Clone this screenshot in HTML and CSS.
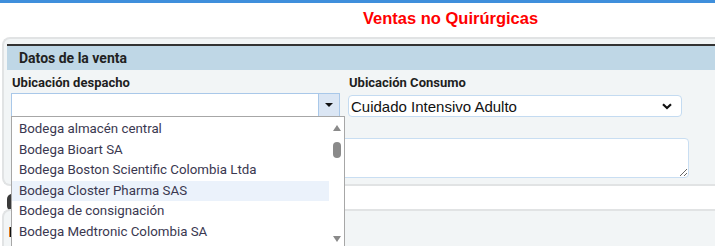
FILE: index.html
```html
<!DOCTYPE html>
<html>
<head>
  <title>Ventas no Quirúrgicas</title>
  <link rel="stylesheet" href="styles.css">
</head>
<body>
  <div class="topbar"></div>
  <h1 class="title">Ventas no Quirúrgicas</h1>

  <div class="panel">
    <div class="panel-header">Datos de la venta</div>
    <div class="fields">
      <div class="field field-left">
        <div class="label">Ubicación despacho</div>
        <div class="combo">
          <div class="combo-input"></div>
          <div class="combo-button"><span class="caret"></span></div>
        </div>
        <div class="dropdown">
          <div class="options">
            <div class="option">Bodega almacén central</div>
            <div class="option">Bodega Bioart SA</div>
            <div class="option">Bodega Boston Scientific Colombia Ltda</div>
            <div class="option hover">Bodega Closter Pharma SAS</div>
            <div class="option">Bodega de consignación</div>
            <div class="option">Bodega Medtronic Colombia SA</div>
          </div>
          <div class="scrollbar">
            <span class="scroll-up"></span>
            <span class="thumb"></span>
            <span class="scroll-space"></span>
            <span class="scroll-down"></span>
          </div>
        </div>
      </div>
      <div class="field field-right">
        <div class="label">Ubicación Consumo</div>
        <div class="select">
          <span>Cuidado Intensivo Adulto</span>
          <svg width="10" height="7" viewBox="0 0 10 7"><path d="M1 1.2 L5 5 L9 1.2" fill="none" stroke="#111" stroke-width="2.2"/></svg>
        </div>
      </div>
    </div>
    <textarea class="notes"></textarea>
  </div>

  <div class="gap">
    <div class="toggle"></div>
  </div>
  <div class="panel panel-next">
    <div class="marker"></div>
  </div>
</body>
</html>
```

FILE: styles.css
```css
body {
  margin: 0;
  font-family: Roboto, "Liberation Sans", sans-serif;
  background: #ffffff;
  overflow: hidden;
  color: #222222;
}

.topbar {
  height: 3px;
  background: #3f8fdc;
}

.title {
  margin: 0;
  height: 34px;
  padding-left: 363px;
  font-family: "Liberation Sans", Arial, sans-serif;
  font-size: 16.5px;
  font-weight: bold;
  line-height: 30px;
  color: #ff0000;
}

.panel {
  margin-left: 2px;
  border: 2px solid #e1e3e4;
  border-right: none;
  border-radius: 8px 0 0 8px;
  background: #f2f5f6;
  padding: 5px 0 6px 3px;
}

.panel-header {
  border-top: 2px solid #333333;
  background: #bfd7e6;
  height: 24px;
  line-height: 24px;
  padding-left: 12px;
  font-size: 14px;
  font-weight: bold;
  color: #222222;
}

.fields {
  display: flex;
  padding-top: 4px;
}

.field {
  display: flex;
  flex-direction: column;
}

.field-left {
  position: relative;
  margin-left: 4px;
  width: 329px;
}

.field-right {
  margin-left: 8px;
  width: 334px;
}

.label {
  font-size: 13px;
  font-weight: bold;
  line-height: 17px;
  color: #1e1e1e;
  margin-left: 1px;
}

.combo {
  display: flex;
  height: 24px;
  margin-top: 2px;
}

.combo-input {
  flex: 1;
  background: #ffffff;
  border: 1px solid #a9c8e9;
  border-right: none;
}

.combo-button {
  width: 20px;
  background: #dbe6f4;
  border: 1px solid #a9c8e9;
  display: flex;
  align-items: center;
  justify-content: center;
}

.caret {
  width: 0;
  height: 0;
  border-left: 4px solid transparent;
  border-right: 4px solid transparent;
  border-top: 4px solid #111111;
}

.dropdown {
  position: absolute;
  top: 42px;
  left: 0;
  width: 332px;
  height: 132px;
  display: flex;
  background: #ffffff;
  border: 1px solid #a7a7a7;
  z-index: 2;
}

.options {
  flex: 1;
  padding-top: 2px;
}

.option {
  height: 20.6px;
  line-height: 20.6px;
  padding-left: 7px;
  font-size: 13.3px;
  color: #3a3850;
}

.option.hover {
  background: #ebf2fb;
}

.scrollbar {
  width: 15px;
  display: flex;
  flex-direction: column;
  align-items: center;
}

.scroll-up {
  margin-top: 8px;
  width: 0;
  height: 0;
  border-left: 4.5px solid transparent;
  border-right: 4.5px solid transparent;
  border-bottom: 6px solid #8a8a8a;
}

.thumb {
  margin-top: 11px;
  width: 8px;
  height: 16px;
  border-radius: 4px;
  background: #8a8a8a;
}

.scroll-space {
  flex: 1;
}

.scroll-down {
  margin-bottom: 7px;
  width: 0;
  height: 0;
  border-left: 4.5px solid transparent;
  border-right: 4.5px solid transparent;
  border-top: 6px solid #8a8a8a;
}

.select {
  display: flex;
  align-items: center;
  justify-content: space-between;
  height: 20px;
  margin-top: 4px;
  padding: 0 9px 0 2px;
  background: #ffffff;
  border: 1px solid #c4dbf1;
  border-radius: 4px;
  font-family: "Liberation Sans", Arial, sans-serif;
  font-size: 15px;
  color: #111111;
}

.notes {
  display: block;
  margin: 21px 0 0 4px;
  width: 678px;
  height: 40px;
  box-sizing: border-box;
  border: 1px solid #c9def2;
  border-radius: 4px;
  background: #ffffff;
  font-family: Roboto, sans-serif;
  vertical-align: top;
}

.gap {
  height: 15px;
  padding-left: 7px;
}

.toggle {
  width: 40px;
  height: 17px;
  margin-top: 8px;
  border-radius: 5px;
  background: #3a3a3a;
}

.panel-next {
  height: 60px;
  border-radius: 8px 0 0 0;
  padding: 16px 0 0 5px;
}

.marker {
  width: 3px;
  height: 10px;
  background: #111111;
  border-left: 1px solid #e07b1a;
}
```
